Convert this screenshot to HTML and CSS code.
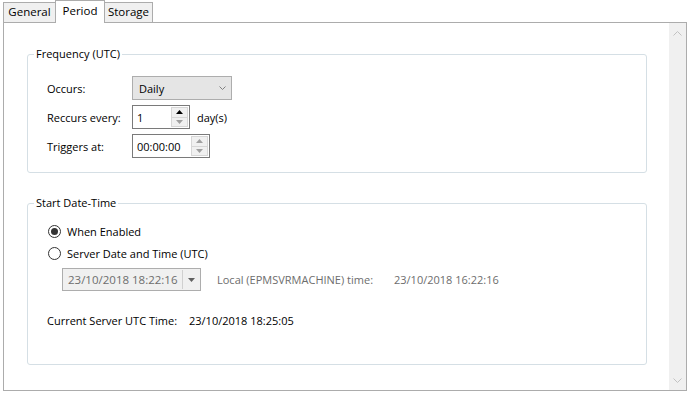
FILE: index.html
```html
<!DOCTYPE html>
<html lang="en">

<head>
    <meta charset="UTF-8">
    <title>Period</title>
    <link rel="stylesheet" href="styles.css">
</head>

<body>
    <div class="dialog">
        <div class="tabs">
            <span class="tab tab-general">General</span>
            <span class="tab tab-period active">Period</span>
            <span class="tab tab-storage">Storage</span>
        </div>

        <div class="panel">
            <div class="page">
                <fieldset class="group group-freq">
                    <legend>Frequency (UTC)</legend>
                    <div class="row">
                        <span class="label">Occurs:</span>
                        <div class="combo">
                            <span>Daily</span>
                            <svg class="chevron" width="7" height="4" viewBox="0 0 7 4">
                                <path d="M0.5 0.5 L3.5 3.5 L6.5 0.5" fill="none" stroke="#808080" stroke-width="1"/>
                            </svg>
                        </div>
                    </div>
                    <div class="row">
                        <span class="label">Reccurs every:</span>
                        <div class="spin spin-days">
                            <span class="spin-value">1</span>
                            <div class="spin-buttons">
                                <span class="spin-btn"><svg width="7" height="4" viewBox="0 0 7 4"><path d="M0 4 L3.5 0 L7 4 Z" fill="#000"/></svg></span>
                                <span class="spin-btn"><svg width="7" height="4" viewBox="0 0 7 4"><path d="M0 0 L3.5 4 L7 0 Z" fill="#a0a0a0"/></svg></span>
                            </div>
                        </div>
                        <span class="unit">day(s)</span>
                    </div>
                    <div class="row">
                        <span class="label">Triggers at:</span>
                        <div class="spin spin-time">
                            <span class="spin-value">00:00:00</span>
                            <div class="spin-buttons">
                                <span class="spin-btn"><svg width="7" height="4" viewBox="0 0 7 4"><path d="M0 4 L3.5 0 L7 4 Z" fill="#a0a0a0"/></svg></span>
                                <span class="spin-btn"><svg width="7" height="4" viewBox="0 0 7 4"><path d="M0 0 L3.5 4 L7 0 Z" fill="#a0a0a0"/></svg></span>
                            </div>
                        </div>
                    </div>
                </fieldset>

                <fieldset class="group group-start">
                    <legend>Start Date-Time</legend>
                    <div class="radio-row">
                        <span class="radio checked"></span>
                        <span>When Enabled</span>
                    </div>
                    <div class="radio-row">
                        <span class="radio"></span>
                        <span>Server Date and Time (UTC)</span>
                    </div>
                    <div class="date-row">
                        <div class="datebox">
                            <span class="date-value">23/10/2018 18:22:16</span>
                            <span class="date-btn">
                                <svg width="7" height="4" viewBox="0 0 7 4"><path d="M0 0 L3.5 4 L7 0 Z" fill="#606060"/></svg>
                            </span>
                        </div>
                        <span class="local-label">Local (EPMSVRMACHINE) time:</span>
                        <span class="local-value">23/10/2018 16:22:16</span>
                    </div>
                    <div class="current-row">
                        <span class="current-label">Current Server UTC Time:</span>
                        <span>23/10/2018 18:25:05</span>
                    </div>
                </fieldset>
            </div>

            <div class="scrollbar">
                <span class="scroll-arrow">
                    <svg width="9" height="5" viewBox="0 0 9 5"><path d="M0.5 4.5 L4.5 0.5 L8.5 4.5" fill="none" stroke="#c2c2c2"/></svg>
                </span>
                <span class="scroll-arrow">
                    <svg width="9" height="5" viewBox="0 0 9 5"><path d="M0.5 0.5 L4.5 4.5 L8.5 0.5" fill="none" stroke="#c2c2c2"/></svg>
                </span>
            </div>
        </div>
    </div>
</body>

</html>
```

FILE: styles.css
```css
body {
    margin: 0;
    font-family: "Open Sans", "Noto Sans", sans-serif;
    font-size: 11px;
    color: #000;
    background-color: #fff;
}

.dialog {
    width: 684px;
    padding-left: 3px;
}

/* tab strip */
.tabs {
    display: flex;
    align-items: flex-end;
    height: 22px;
}

.tab {
    box-sizing: border-box;
    height: 20px;
    line-height: 18px;
    text-align: center;
    border: 1px solid #acacac;
    border-bottom: none;
    background-color: #f0f0f0;
    font-size: 11.5px;
}

.tab-general {
    width: 53px;
}

.tab-period {
    width: 50px;
    margin-left: -1px;
}

.tab-storage {
    width: 49px;
    margin-left: -1px;
}

.tab.active {
    position: relative;
    z-index: 1;
    height: 23px;
    line-height: 20px;
    margin-bottom: -1px;
    background-color: #fff;
}

/* panel */
.panel {
    box-sizing: border-box;
    height: 369px;
    border: 1px solid #acacac;
    display: flex;
}

.page {
    flex: 1;
    padding: 23px 22px 0 23px;
}

.group {
    margin: 0;
    border: 1px solid #d5dfe5;
    border-radius: 3px;
    padding: 14px 0 14px 19px;
}

.group legend {
    margin-left: -13px;
    padding: 0 2px;
    line-height: 16px;
}

.row {
    display: flex;
    align-items: center;
    height: 24px;
    margin-bottom: 5px;
}

.row:last-child {
    margin-bottom: 0;
}

.label {
    width: 85px;
}

.combo {
    box-sizing: border-box;
    width: 100px;
    height: 24px;
    border: 1px solid #adadad;
    background-color: #e5e5e5;
    display: flex;
    align-items: center;
    justify-content: space-between;
    padding: 0 5px 0 6px;
}

.spin {
    box-sizing: border-box;
    height: 24px;
    border: 1px solid #7a7a7a;
    background-color: #fff;
    display: flex;
    align-items: center;
    justify-content: space-between;
    padding-left: 4px;
}

.spin-days {
    width: 58px;
}

.spin-time {
    width: 78px;
}

.spin-buttons {
    display: flex;
    flex-direction: column;
    width: 17px;
    height: 20px;
    margin-right: 1px;
}

.spin-btn {
    flex: 1;
    display: flex;
    align-items: center;
    justify-content: center;
    background-color: #f0f0f0;
    border: 1px solid #d6d6d6;
}

.spin-btn + .spin-btn {
    border-top: none;
}

.unit {
    margin-left: 7px;
}

.group-start {
    margin-top: 22px;
    padding-top: 11px;
    padding-bottom: 36px;
}

.radio-row {
    display: flex;
    align-items: center;
    height: 18px;
    margin-bottom: 4px;
}

.radio {
    box-sizing: border-box;
    width: 13px;
    height: 13px;
    border: 1px solid #333;
    border-radius: 50%;
    margin: 0 6px 0 1px;
    display: flex;
    align-items: center;
    justify-content: center;
}

.radio.checked::after {
    content: "";
    width: 7px;
    height: 7px;
    border-radius: 50%;
    background-color: #333;
}

.date-row {
    display: flex;
    align-items: center;
    margin-top: 6px;
    color: #6d6d6d;
}

.datebox {
    box-sizing: border-box;
    width: 139px;
    height: 23px;
    margin-left: 15px;
    border: 1px solid #adadad;
    background-color: #f0f0f0;
    display: flex;
    align-items: center;
    justify-content: space-between;
    padding-left: 5px;
    font-size: 11.5px;
}

.date-btn {
    box-sizing: border-box;
    width: 17px;
    height: 19px;
    margin-right: 1px;
    border-left: 1px solid #d0d0d0;
    display: flex;
    align-items: center;
    justify-content: center;
}

.local-label {
    width: 177px;
    margin-left: 16px;
}

.current-row {
    display: flex;
    align-items: center;
    height: 16px;
    margin-top: 21px;
}

.current-label {
    width: 142px;
}

/* scrollbar */
.scrollbar {
    width: 17px;
    background-color: #f0f0f0;
    display: flex;
    flex-direction: column;
    justify-content: space-between;
}

.scroll-arrow {
    height: 20px;
    display: flex;
    align-items: center;
    justify-content: center;
}
```
